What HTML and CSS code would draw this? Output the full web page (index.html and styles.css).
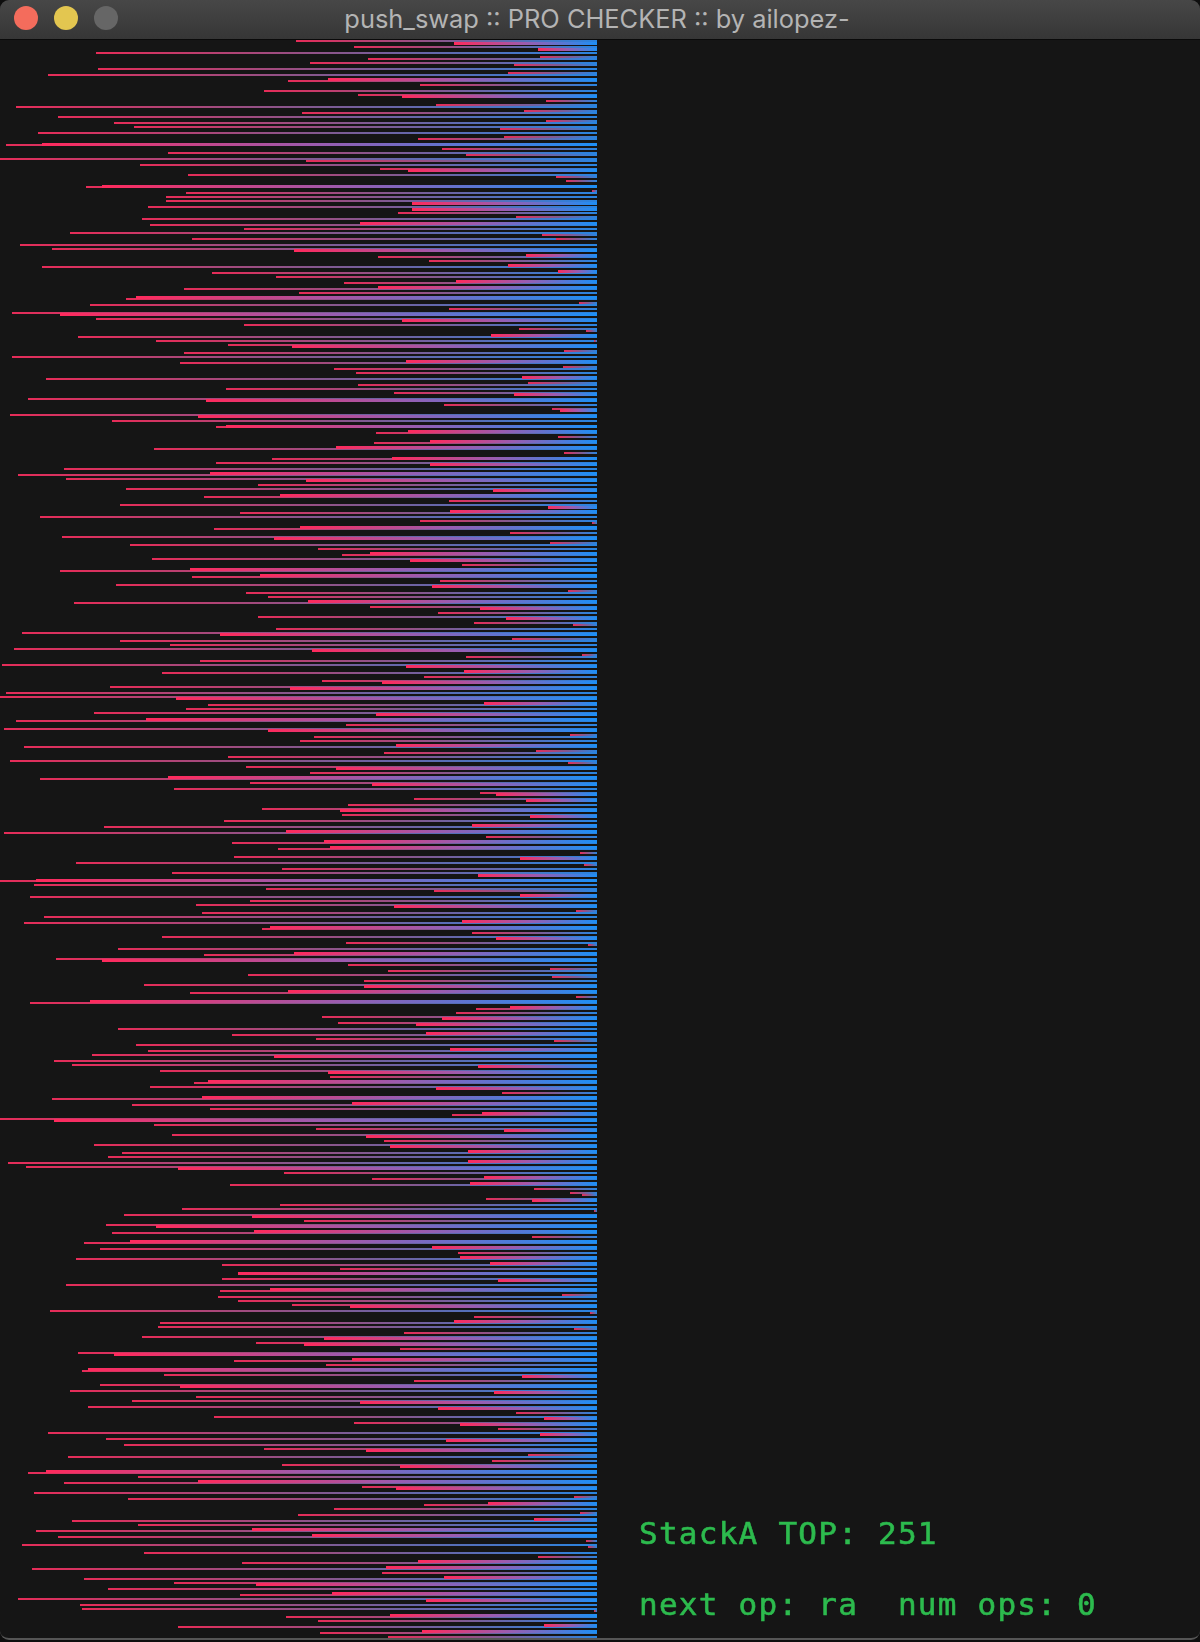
FILE: index.html
```html
<!DOCTYPE html>
<html lang="en">
<head>
<meta charset="utf-8">
<title>push_swap :: PRO CHECKER :: by ailopez-</title>
<link rel="stylesheet" href="styles.css">
</head>
<body>
<main class="window">
  <header class="titlebar">
    <div class="lights">
      <span class="light light-close"></span>
      <span class="light light-min"></span>
      <span class="light light-max"></span>
    </div>
    <h1 class="title">push_swap :: PRO CHECKER :: by ailopez-</h1>
  </header>
  <section class="canvas">
    <div class="stack" id="stack"></div>
    <aside class="status">
      <p class="status-line">StackA TOP: 251</p>
      <p class="status-line">next op: ra&nbsp;&nbsp;num ops: 0</p>
    </aside>
  </section>
</main>
<script src="bars.js"></script>
</body>
</html>
```

FILE: styles.css
```css
html, body {
  margin: 0;
  padding: 0;
  background: #0e0e0e;
}

.window {
  width: 1200px;
  height: 1640px;
  display: flex;
  flex-direction: column;
  box-sizing: border-box;
  overflow: hidden;
  border-radius: 9px;
  border-bottom: 2px solid #555;
  background: #151515;
}

.titlebar {
  position: relative;
  flex: none;
  height: 40px;
  box-sizing: border-box;
  display: flex;
  align-items: center;
  justify-content: center;
  border-bottom: 1px solid #0a0a0a;
  background: linear-gradient(180deg, #474747 0%, #363636 100%);
}

.lights {
  position: absolute;
  left: 14px;
  top: 6px;
  display: flex;
  gap: 16px;
}

.light {
  width: 24px;
  height: 24px;
  border-radius: 50%;
}

.light-close { background: #f46c5c; }
.light-min { background: #e3c650; }
.light-max { background: #666666; }

.title {
  margin: -3px 6px 0 0;
  font: 400 25.4px Inter, "Liberation Sans", sans-serif;
  color: #b4b4b4;
  white-space: nowrap;
}

.canvas {
  flex: 1;
  display: flex;
  min-height: 0;
}

.stack {
  position: relative;
  flex: none;
  width: 600px;
  filter: blur(0.7px);
}

.bar {
  position: absolute;
  right: 3px;
  height: 2px;
  background: linear-gradient(90deg, #e62c58 0%, #84588f 50%, #2a84e0 100%);
}

.bar-thick {
  height: 3px;
  background: linear-gradient(90deg, #ff2a5c 0%, #9a5cb0 50%, #1e8ff5 100%);
}

.status {
  flex: 1;
  display: flex;
  flex-direction: column;
  justify-content: flex-end;
  gap: 34px;
  padding: 0 0 15px 39px;
  filter: blur(0.4px);
}

.status-line {
  margin: 0;
  font: 400 31px/37px "DejaVu Sans Mono", monospace;
  letter-spacing: 1.25px;
  -webkit-text-stroke: 0.6px #2dbb4e;
  color: #2dbb4e;
  white-space: pre;
}
```

FILE: bars.js
```js
// Each group: the coordinates of the bar starts, y = y0 + ry / sy, x = rx / sx + x0.
var GROUPS = [
  { y0: 0, sy: 1, x0: 0, sx: 1, rows: "41,296 53,96 69,98 75,48 81,288 91,264 107,16 117,58 123,114 127,134 133,38 145,6 144,42t 153,168 159,0 165,140 175,188 187,86 186,102t 193,186 197,166 201,166 207,148 219,142 225,150 229,244 233,70 239,192 43,454t 47,354 49,538t 57,540 59,368 63,310 65,514 73,508 79,328t 85,420 96,402t 95,358 101,546 105,436 111,524 113,302 121,546 129,500 139,418 137,504 149,442 155,466 161,306 169,380 170,408t 177,556 181,566 191,592 203,412t 209,412t 213,398 217,516 223,360t 235,542 239,556" },
  { y0: 240, sy: 3, x0: 0, sx: 2.613, rows: "15,52 27,137 31,769t 45,1375t 51,988 63,1120 75,1328t 81,110 93,1458t 99,555 111,722 125,1192t 129,899 143,989t 147,481 159,780 173,355t 177,330 189,1512 195,236 207,1172 223,157t 219,31 237,252 242,1051t 255,638 267,1355 272,1531 285,1282t 291,205 303,408 303,1553 315,596 320,764t 334,1474 339,481 351,31 365,1062t 369,470 381,1470 387,873 399,930 411,1364t 417,120 429,1380 435,936 447,591 459,1030 464,1344t 477,73 482,538t 495,1160 507,1443 511,1463t 525,26 529,517t 543,293 558,591t 561,565 575,1066t 579,983 591,1458 604,1124t 609,977 622,879t 627,403 639,1474" },
  { y0: 457, sy: 3, x0: 0, sx: 2.613, rows: "3,1025t 5,712 17,565 23,1124t 35,168 49,550t 54,47 66,173 71,800t 84,675 96,330 101,1287t 115,732t 120,534 132,1172 144,314 150,1432t 163,1177t 168,628 180,105 192,1098 197,1548 212,785t 216,560 228,1333 240,163 244,717t 258,1438 264,340 276,832 290,967t 294,894 306,397 311,1072t 324,1207 338,497t 342,157 355,680t 360,502 372,1150 384,303 389,1130t 403,1485 408,643 420,700 433,805t 438,194 450,967 455,1255t 467,1145 480,675 485,1322t 498,1239 504,1496 516,722 528,58 533,576t 547,1339 552,314 564,444 576,37 581,815t 595,1522 600,1218 612,523 624,5 629,1062t 643,1213t 648,424" },
  { y0: 674, sy: 3, x0: 0, sx: 2.613, rows: "9,1108 21,842 26,998t 39,288 44,758t 57,16 69,0 74,460t 87,1265t 93,544 104,486 117,246 122,983t 137,382t 141,42 153,904 165,11 170,700t 184,1490 188,821 201,785 214,1035t 219,63 232,1401 237,1004 249,597 261,26 266,1485 279,643 284,878t 297,810 311,439t 315,105 327,654 332,972t 345,455 357,1254 361,1296t 375,1082 380,1375t 393,910 405,685 409,889t 423,894 428,1385t 441,586 453,1234t 459,272 472,748t 477,10 489,1270 503,847t 507,606 521,862t 525,727 537,1516 549,612 554,1359t 567,199 573,1527 585,738 597,450 603,1249t 618,94t 621,0 633,89 645,695" },
  { y0: 891, sy: 3, x0: 0, sx: 2.613, rows: "1,1134 13,1359t 18,78 30,654 42,512 47,1030t 61,1505 66,528 78,115 91,1207t 96,63 110,706t 114,685 126,1233 138,423 143,1296t 156,904 161,1537 174,309 187,769t 192,533 204,146 208,267t 222,910 235,1437 240,1014 252,648 257,1443 270,951 282,377 287,951t 301,753t 306,497 318,1505 332,235t 336,78 350,1333t 354,1244 366,1192 378,842 382,1155t 396,883 401,1087t 414,309 427,1113t 432,606 444,826 449,1448 462,355 475,1176t 480,387 492,240 497,717t 510,141 522,188 527,1249t 540,418 545,857t 558,862 572,544t 576,507 588,392 593,1139t 606,1312 620,528t 624,136 636,920t 642,345" },
  { y0: 1108, sy: 3, x0: 0, sx: 2.613, rows: "3,549 17,1260t 21,1181 33,0 37,141t 51,402 63,826 68,1317t 81,450 86,956t 99,1004 111,246 116,1019t 129,1223t 135,319 147,282 159,1223t 165,21 177,68 182,465t 195,743 208,1265t 213,972 226,1228t 231,601 243,1396 255,1490 260,1522 273,1270 278,1390t 291,732 303,476 308,1553 321,324 325,659t 339,795 351,277 355,408t 370,664t 375,293 387,1390 401,340t 405,220 418,1129t 423,261 435,1197 448,1202t 453,199 465,1281t 471,580 483,889 497,622t 513,580 518,1302t 531,172 545,706t 549,575 561,1469 567,570 579,622 591,763 595,915t 609,131 614,1542 627,1239 640,1186t 645,418" },
  { y0: 1325, sy: 3, x0: 0, sx: 2.613, rows: "6,413 12,1500 24,1056 36,371 41,847t 54,669 58,795t 72,1045 84,204 88,298t 103,920t 108,612 120,852 133,230t 137,214 150,429 155,1364t 168,1082 180,261 184,470t 198,183 203,1291t 216,512 228,345 233,941t 246,230 251,1145t 264,1348 276,559 281,1422t 294,925 298,1202t 312,1302 324,125 329,1411t 342,277 347,1166t 360,324 372,690 377,956t 391,1380 396,178 408,1286 420,737 425,1045t 439,120t 443,73 456,361 469,517t 474,167 486,946 491,1035t 504,89 517,1500 522,335 535,1275t 540,1108 552,873 565,1516 570,779 583,1396t 588,188 600,361 613,659t 618,94 631,815t 636,152" },
  { y0: 1540, sy: 3, x0: 0, sx: 2.529, rows: "3,1483 15,56 21,1487 39,365 51,1361 63,1058t 69,613 81,977t 87,81 99,967 111,1124t 117,213 129,440 133,648t 147,274 160,840t 165,607 177,46 182,1078t 195,203 207,208 212,1502 226,986t 231,724 243,805 255,1376t 261,451 274,1067t 279,810 291,982" }
];

var CANVAS_TOP = 40;
var stack = document.getElementById("stack");
var thin = [];
var thick = [];

GROUPS.forEach(function (group) {
  group.rows.split(" ").forEach(function (item) {
    var isThick = item.charAt(item.length - 1) === "t";
    var parts = item.replace("t", "").split(",");
    var bar = {
      y: group.y0 + Number(parts[0]) / group.sy,
      x: Math.round(Number(parts[1]) / group.sx + group.x0)
    };
    (isThick ? thick : thin).push(bar);
  });
});

function addBar(bar, isThick) {
  var el = document.createElement("div");
  el.className = isThick ? "bar bar-thick" : "bar";
  el.style.top = Math.round(bar.y - (isThick ? 1.5 : 1) - CANVAS_TOP) + "px";
  el.style.left = bar.x + "px";
  stack.appendChild(el);
}

thin.forEach(function (bar) { addBar(bar, false); });
thick.forEach(function (bar) { addBar(bar, true); });
```
